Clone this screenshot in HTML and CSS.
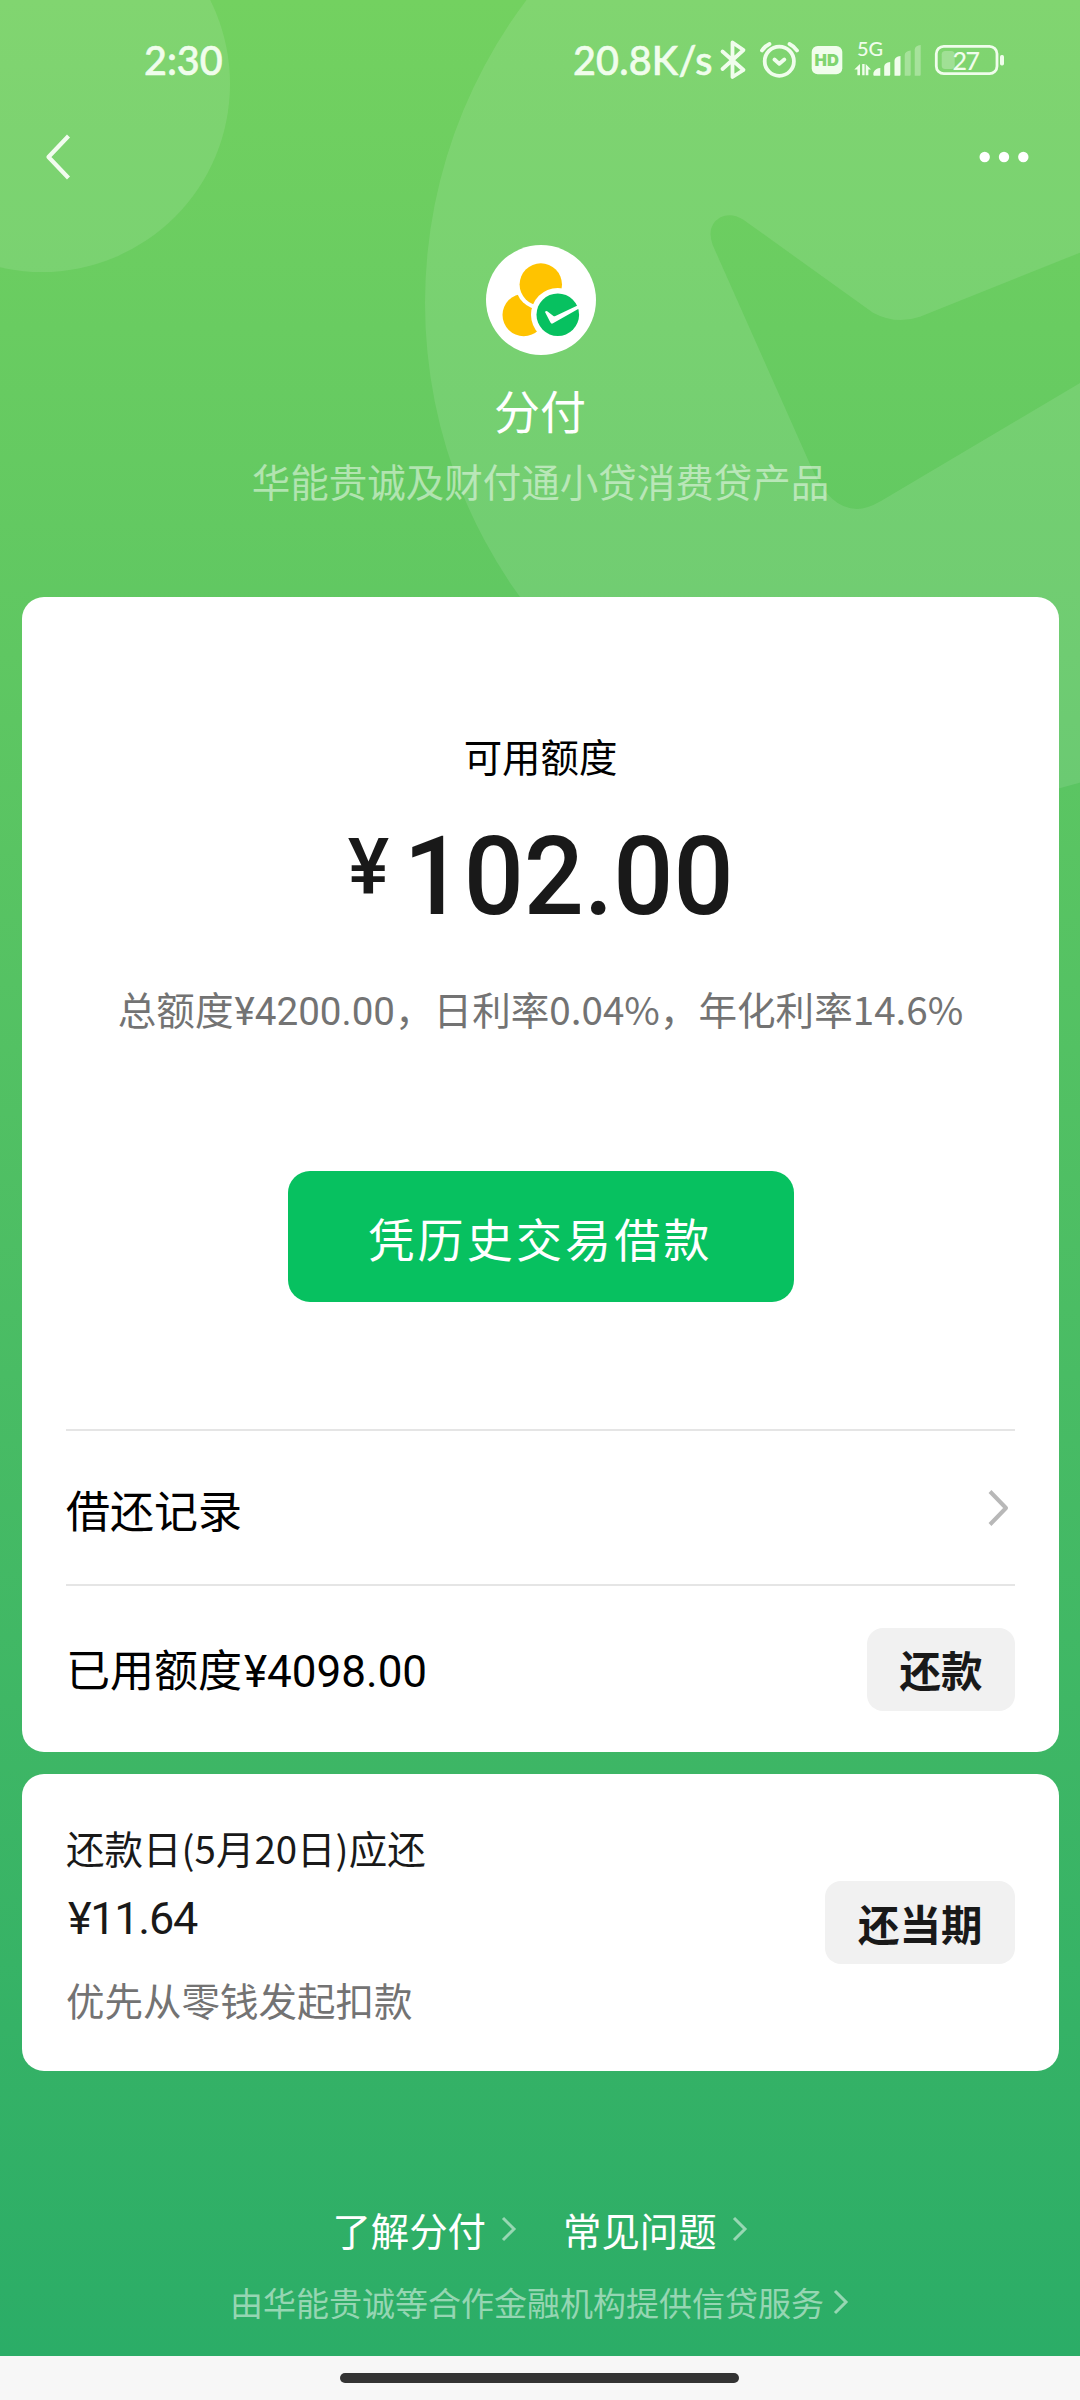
FILE: index.html
```html
<!DOCTYPE html>
<html lang="zh-CN">
<head>
<meta charset="utf-8">
<title>分付</title>
<link rel="stylesheet" href="styles.css">
</head>
<body>
<div class="page">
  <svg class="backdrop" width="1080" height="2356" viewBox="0 0 1080 2356" aria-hidden="true">
    <circle cx="42" cy="84" r="188"/>
    <path fill-rule="evenodd" d="M1431 303A503 503 0 1 1 425 303A503 503 0 1 1 1431 303ZM712.7 245L811.7 468Q830 509 857 509Q867 509 881 501L1080 383L1200 312V213L1080 252.7L920 316.7Q896 325 873 312.7L743 219.500Q731 212 720 217.500Q706 226 712.700 245Z"/>
  </svg>

  <header class="status">
    <span class="status-time">2:30</span>
    <div class="status-right">
      <span class="status-speed">20.8K/s</span>
      <svg class="status-icons" width="292" height="60" viewBox="716 30 292 60" fill="none" stroke="#f0fdec">
        <path d="M722.500 51.500L743.500 70L732.500 77V42.500L743.500 50L722.500 69" stroke-width="3.800" stroke-linejoin="round" stroke-linecap="round"/>
        <g stroke-width="3.800" stroke-linecap="round" stroke-linejoin="round">
          <circle cx="779.300" cy="61.200" r="14.600"/>
          <path d="M774.500 59.500l4.800 4.300 5-4.300M762 50.500q2.500-4 7.500-6.500M789.500 44q5 2.500 7.500 6.500"/>
        </g>
        <rect x="811.700" y="46" width="30.600" height="28.300" rx="6" fill="#f0fdec" stroke="none"/>
        <g fill="#f0fdec" stroke="none">
          <path d="M854.300 69.500l5.700-5.500v11.300h-2.600v-5.800zM862.200 64h2.400v11.300h-2.400zM865.700 64l5.300 5.500h-2.600v5.800h-2.700z"/>
          <path d="M873.500 72.500q2-4.500 6.800-4.500V75.700H874q-1 0-.5-3.200zM884.200 66.500q.3-4 6-4.500V74.700q0 1-1 1h-5zM894.500 60.500q.3-4 6-4.500V74.700q0 1-1 1h-5z"/>
          <path opacity=".35" d="M904.700 55q.3-4 6-4.500V74.700q0 1-1 1h-5zM914.700 49.500q.3-4 6-4.500V74.700q0 1-1 1h-5z"/>
          <rect opacity=".3" x="941.700" y="51" width="13" height="18" rx="3.500"/>
          <rect x="1000" y="55" width="4" height="10.500" rx="1.700"/>
        </g>
        <rect x="936.300" y="46.300" width="60.700" height="27.400" rx="7.500" stroke-width="2.800"/>
        <g class="status-glyphs" fill="#f0fdec" stroke="none">
          <text x="814.500" y="65.800" class="hd">HD</text>
          <text x="857" y="56" class="net">5G</text>
          <text x="952.500" y="69.500" class="level">27</text>
        </g>
      </svg>
    </div>
  </header>

  <nav class="nav">
    <svg width="28" height="48" viewBox="0 0 28 48" fill="none" stroke="#f2fcef" stroke-width="4.200"><path d="M24.500 3L4.500 24 24.500 45" stroke-linejoin="round"/></svg>
    <svg width="52" height="12" viewBox="0 0 52 12" fill="#fff"><circle cx="6.700" cy="6" r="5.200"/><circle cx="26" cy="6" r="5.200"/><circle cx="45.300" cy="6" r="5.200"/></svg>
  </nav>

  <section class="brand">
    <svg width="110" height="110" viewBox="486 245 110 110">
      <circle cx="541" cy="300" r="55" fill="#fff"/>
      <circle cx="523.700" cy="315" r="21.200" fill="#ffc300"/>
      <circle cx="540.800" cy="284.500" r="25.200" fill="#fff"/>
      <circle cx="540.800" cy="284.500" r="21.200" fill="#ffc300"/>
      <circle cx="557.800" cy="314.700" r="26.800" fill="#fff"/>
      <circle cx="557.800" cy="314.700" r="21.300" fill="#07c160"/>
      <path d="M545 312q1-1.500 2.600-.5l5.800 4.400q1 .6 2 0L577.500 305.500l2 2.800-26.500 15q-1.700 1-2.700-1z" fill="#fff"/>
    </svg>
    <h1 class="brand-name">分付</h1>
    <p class="brand-note">华能贵诚及财付通小贷消费贷产品</p>
  </section>

  <main class="cards">
    <section class="card">
      <div class="quota">
        <p class="quota-label">可用额度</p>
        <p class="quota-amount"><span class="currency">¥</span><span class="figure">102.00</span></p>
        <p class="quota-rate">总额度<span class="num">¥4200.00</span>，日利率0.04%，年化利率14.6%</p>
        <button class="borrow">凭历史交易借款</button>
      </div>
      <div class="row row-history">
        <span class="row-label">借还记录</span>
        <svg class="row-arrow" width="22" height="38" viewBox="0 0 22 38" fill="none" stroke="#b8b8b8" stroke-width="4"><path d="M2 2.500L18 19 2 35.500" stroke-linejoin="round"/></svg>
      </div>
      <div class="row row-used">
        <span class="row-label">已用额度<span class="num">¥4098.00</span></span>
        <button class="small-button">还款</button>
      </div>
    </section>

    <section class="card bill">
      <div>
        <p class="bill-title">还款日(5月20日)应还</p>
        <p class="bill-amount">¥11.64</p>
        <p class="bill-note">优先从零钱发起扣款</p>
      </div>
      <button class="small-button">还当期</button>
    </section>
  </main>

  <footer class="footer">
    <div class="links">
      <a class="link">了解分付<svg width="16" height="26" viewBox="0 0 16 26"><path d="M2 2L13 13 2 24"/></svg></a>
      <a class="link">常见问题<svg width="16" height="26" viewBox="0 0 16 26"><path d="M2 2L13 13 2 24"/></svg></a>
    </div>
    <a class="provider">由华能贵诚等合作金融机构提供信贷服务<svg width="16" height="26" viewBox="0 0 16 26"><path d="M2 2L13 13 2 24"/></svg></a>
  </footer>
</div>
<div class="home-bar"><span class="home-pill"></span></div>
</body>
</html>
```

FILE: styles.css
```css
* { box-sizing: border-box; }
body {
  margin: 0;
  width: 1080px;
  height: 2400px;
  font-family: "Noto Sans CJK SC", sans-serif;
  color: #000;
}
h1, p { margin: 0; font-weight: 400; white-space: nowrap; }
button { border: 0; padding: 0; font-family: inherit; white-space: nowrap; }
svg { display: block; flex: none; }

.page {
  position: relative;
  height: 2356px;
  background: linear-gradient(#73d160, #2bad67);
  overflow: hidden;
}
.backdrop { position: absolute; left: 0; top: 0; fill: #fff; fill-opacity: .1; }
.status, .nav, .brand, .cards, .footer { position: relative; }

.status {
  display: flex;
  justify-content: space-between;
  height: 120px;
  padding: 38px 72px 0 144px;
  font-family: Lato, sans-serif;
  font-weight: 500;
  font-size: 39.500px;
  line-height: 44px;
  color: #f0fdec;
  -webkit-text-stroke: .6px #f0fdec;
}
.status-right { display: flex; }
.status-speed { width: 143px; white-space: nowrap; letter-spacing: .2px; }
.status-icons { margin-top: -8px; -webkit-text-stroke: 0; }
.hd { font: 900 16.500px Inter, sans-serif; fill: #7fd46f; }
.net { font: 500 20px Lato, sans-serif; }
.level { font: 500 25px Lato, sans-serif; letter-spacing: -1.500px; }

.nav {
  display: flex;
  justify-content: space-between;
  align-items: center;
  height: 74px;
  padding: 0 50px 0 44px;
}

.brand {
  display: flex;
  flex-direction: column;
  align-items: center;
  height: 403px;
  padding: 51px 0 0 2px;
}
.brand-name { margin-top: 24px; padding-right: 2px; font-size: 46px; line-height: 60px; color: #fff; }
.brand-note { margin-top: 16px; padding-right: 1px; font-size: 38.500px; line-height: 50px; color: rgba(255, 255, 255, .5); }

.cards { display: flex; flex-direction: column; gap: 22px; padding: 0 21px 0 22px; }
.card { background: #fff; border-radius: 22px; padding: 0 44px; }

.quota {
  display: flex;
  flex-direction: column;
  align-items: center;
  height: 832px;
  padding-top: 133px;
}
.quota-label { font-size: 38.400px; line-height: 50px; }
.quota-amount {
  display: flex;
  align-items: flex-start;
  gap: 15px;
  margin-top: 32px;
  height: 130px;
  font-family: Roboto, sans-serif;
  font-weight: 500;
  color: #191919;
}
.currency { margin: 0 -7px 0 7px; font-size: 78px; line-height: 110px; }
.figure { font-size: 110px; line-height: 130px; transform: scaleX(.962); }
.quota-rate { margin-top: 41px; font-size: 38.600px; line-height: 50px; color: #737373; }
.num { margin-left: 1px; font-family: Roboto, sans-serif; }
.borrow {
  width: 506px;
  height: 131px;
  margin-top: 134px;
  border-radius: 22px;
  background: #07c160;
  color: #fff;
  font-size: 46px;
  letter-spacing: 3.200px;
}
.row {
  display: flex;
  justify-content: space-between;
  align-items: center;
  border-top: 2px solid #e5e5e5;
  font-size: 44px;
}
.row-history { height: 155px; }
.row-history .row-label { padding-top: 2px; }
.row-arrow { margin-right: 5px; }
.row-used { height: 168px; }
.row-used .row-label { padding-bottom: 3px; }
.row-used .num { margin-left: 2px; }
.small-button {
  height: 83px;
  padding: 0 32.500px;
  border-radius: 16px;
  background: #f1f1f1;
  color: #191919;
  font-size: 41.500px;
  font-weight: 700;
}
.bill {
  display: flex;
  justify-content: space-between;
  align-items: center;
  height: 297px;
  color: #191919;
}
.bill-title { font-size: 38.500px; line-height: 50px; }
.bill-amount { margin: 15px 0 23px 2px; font: 45px/64px Roboto, sans-serif; letter-spacing: -1.300px; }
.bill-note { font-size: 38.500px; line-height: 50px; color: #737373; }

.footer {
  display: flex;
  flex-direction: column;
  align-items: center;
  padding-top: 133px;
}
.footer path { fill: none; stroke: rgba(255, 255, 255, .5); stroke-width: 3; }
.links { display: flex; gap: 46px; }
.link, .provider { display: flex; align-items: center; white-space: nowrap; }
.link { gap: 15px; font-size: 38.400px; line-height: 50px; color: #fff; }
.provider { gap: 9px; margin-top: 26px; padding-right: 1px; font-size: 33px; line-height: 44px; color: rgba(255, 255, 255, .5); }

.home-bar {
  display: flex;
  justify-content: center;
  height: 44px;
  padding: 17px 1px 0 0;
  background: #f7f7f7;
}
.home-pill { width: 399px; height: 10px; border-radius: 5px; background: #333; }
```
